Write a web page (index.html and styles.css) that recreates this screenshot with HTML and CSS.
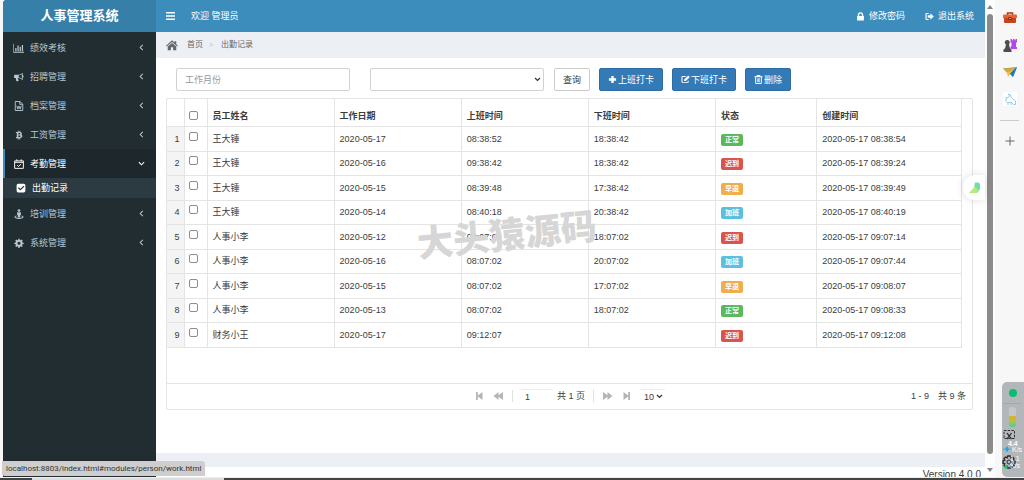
FILE: index.html
```html
<!DOCTYPE html>
<html lang="zh-CN">
<head>
<meta charset="utf-8">
<title>人事管理系统</title>
<link rel="stylesheet" href="styles.css">
</head>
<body>
<div class="window">
  <aside class="sidebar">
    <a class="logo" href="#">人事管理系统</a>
    <nav class="menu">
      <a class="menu-item" href="#"><svg class="icon" viewBox="0 0 18 16"><path d="M1 1v13h16v1.500H0V1zM3 8h2v5H3zM6.500 4h2v9h-2zM10 6h2v7h-2zM13.500 3h2v10h-2z"/></svg><span class="menu-text">绩效考核</span><svg class="caret" viewBox="0 0 8 8"><path d="M5.500 1 2.500 4l3 3"/></svg></a>
      <a class="menu-item" href="#"><svg class="icon" viewBox="0 0 18 16"><path fill-rule="evenodd" d="M15 1v4.500a1.500 1.500 0 0 1 0 3V13c-3-2.300-5-3.200-7.500-3.400-.8.800-.3 1.600.3 2.200.2.700.3 1.200 1 1.700-.8 1.500-3 1.500-4 .7-.5-1.500-1.200-2.800-.7-4.700H3C1 9.500 1 8.500 1 7s.3-2.500 2-2.500h4.500C10 4.300 12 3.300 15 1zM13.600 3.600C11.800 4.800 10.300 5.400 8.500 5.700v2.700c1.800.300 3.300.900 5.100 2.200z"/></svg><span class="menu-text">招聘管理</span><svg class="caret" viewBox="0 0 8 8"><path d="M5.500 1 2.500 4l3 3"/></svg></a>
      <a class="menu-item" href="#"><svg class="icon line" viewBox="0 0 18 16"><path d="M3 .8h7.500L15 5v10.200H3zM10.200 1v4.300H15M5.500 7.500 7 13l2-5 2 5 1.500-5.500"/></svg><span class="menu-text">档案管理</span><svg class="caret" viewBox="0 0 8 8"><path d="M5.500 1 2.500 4l3 3"/></svg></a>
      <a class="menu-item" href="#"><svg class="icon" viewBox="0 0 18 16"><path fill-rule="evenodd" d="M4 3h3V1h1.400v2h1.200V1H11v2.200c3 .4 3.600 3.500 1.600 4.500 3 1 2.400 5-1.600 5.200V15H9.600v-2H8.400v2H7v-2H4l.3-1.700h1.200V4.700H4zm4 1.800v2.300c2 0 3 0 3-1.200s-1-1.100-3-1.100zm0 3.900v2.500c2.300 0 3.500 0 3.500-1.300S10.200 8.700 8 8.700z"/></svg><span class="menu-text">工资管理</span><svg class="caret" viewBox="0 0 8 8"><path d="M5.500 1 2.500 4l3 3"/></svg></a>
      <a class="menu-item active" href="#"><svg class="icon line" viewBox="0 0 18 16"><path d="M2 3h14v12H2zM2 5.300h14M5.500.5v3M12.500.5v3M6 9.800l2.200 2.200 4-4.200"/></svg><span class="menu-text">考勤管理</span><svg class="caret" viewBox="0 0 8 8"><path d="M1 2.500l3 3 3-3"/></svg></a>
      <a class="submenu-item" href="#modules/person/work.html"><svg class="icon" viewBox="0 0 18 16"><path fill-rule="evenodd" d="M4.500 1h9A2.500 2.500 0 0 1 16 3.500v9a2.500 2.500 0 0 1-2.500 2.500h-9A2.500 2.500 0 0 1 2 12.500v-9A2.500 2.500 0 0 1 4.500 1zM4 8l4 4 6.500-6.300L13 4.200 8 9.200 5.500 6.600z"/></svg><span class="menu-text">出勤记录</span></a>
      <a class="menu-item" href="#"><svg class="icon" viewBox="0 0 18 16"><circle cx="9" cy="2.300" r="2.100"/><path d="M6 5h6v4.500h-1V13H7V9.500H6zM5 10.500v1.200c-3 .8-1.500 2.300 4 2.300s7-1.500 4-2.300v-1.200c6 1.500 3 5.300-4 5.300s-10-3.800-4-5.300z"/></svg><span class="menu-text">培训管理</span><svg class="caret" viewBox="0 0 8 8"><path d="M5.500 1 2.500 4l3 3"/></svg></a>
      <a class="menu-item" href="#"><svg class="icon" viewBox="0 0 18 16"><path fill-rule="evenodd" d="M8 1h2l.4 2 1.400.6 1.700-1.200 1.500 1.500-1.200 1.700.6 1.400 2 .4v2l-2 .4-.6 1.400 1.200 1.700-1.500 1.500-1.700-1.200-1.400.6-.4 2H8l-.4-2-1.400-.6-1.700 1.200L3 12.900l1.200-1.700-.6-1.400-2-.4v-2l2-.4.6-1.400L3 3.900l1.500-1.500 1.700 1.200L7.600 3zM9 5.900a2.500 2.500 0 1 0 0 5 2.500 2.500 0 0 0 0-5z"/></svg><span class="menu-text">系统管理</span><svg class="caret" viewBox="0 0 8 8"><path d="M5.500 1 2.500 4l3 3"/></svg></a>
    </nav>
  </aside>

  <main class="main">
    <header class="topbar">
      <button class="toggle" type="button" aria-label="切换菜单"><svg viewBox="0 0 9 8"><path d="M0 0h9v1.600H0zM0 3.200h9v1.600H0zM0 6.400h9V8H0z"/></svg></button>
      <span class="welcome">欢迎 管理员</span>
      <a class="top-link" href="#"><svg class="top-icon" viewBox="0 0 10 10"><path fill-rule="evenodd" d="M2 4.500V3.200a3 3 0 0 1 6 0v1.300h.8V9.500H1.200v-5zm1.500 0h3V3.200a1.500 1.500 0 0 0-3 0z"/></svg>修改密码</a>
      <a class="top-link" href="#"><svg class="top-icon" viewBox="0 0 10 10"><path d="M4 1v1.200H1.800v5.600H4V9H1.800Q.5 9 .5 7.800V2.200Q.5 1 1.800 1zM6 1.500 9.800 5 6 8.500v-2H3v-3h3z"/></svg>退出系统</a>
    </header>
    <nav class="breadcrumb">
      <svg class="home" viewBox="0 0 14 12"><path d="M7 0 10 2.600V1h2v3.400l2 1.800-.8.900L7 1.800.8 7.100 0 6.200zM7 3l5 4.300V11.500H8.300V8H5.700v3.500H2V7.300z"/></svg>
      <a href="#">首页</a><span class="sep">&gt;</span><a href="#">出勤记录</a>
    </nav>
    <section class="content">
      <form class="search">
        <input class="field" type="text" aria-label="工作月份" placeholder="工作月份">
        <select class="field" aria-label="状态"><option></option><option>正常</option><option>迟到</option><option>早退</option><option>加班</option></select>
        <div class="actions">
          <button class="btn" type="button">查询</button>
          <button class="btn primary" type="button"><svg viewBox="0 0 10 10"><path d="M3.700 1h2.600v2.700H9v2.600H6.300V9H3.700V6.300H1V3.700h2.700z"/></svg>上班打卡</button>
          <button class="btn primary" type="button"><svg viewBox="0 0 10 10"><path d="M6 1H2Q.5 1 .5 2.500v5Q.5 9 2 9h5q1.500 0 1.500-1.500V6L7.300 7v1H1.700V2.200h3zM8 .5 9.800 2.300 5.500 6.800H3.500V5z"/></svg>下班打卡</button>
          <button class="btn primary" type="button"><svg viewBox="0 0 10 10"><path fill-rule="evenodd" d="M3.200 0h3.600l.5 1.500H9.500v1H8.700V8.700q0 1.300-1.300 1.300H2.600Q1.300 10 1.300 8.700V2.500H.5v-1h2.200zM2.300 2.500V9h5.400V2.500zM3.200 3.500h.8V8h-.8zM4.600 3.500h.8V8h-.8zM6 3.500h.8V8H6z"/></svg>删除</button>
        </div>
      </form>

      <div class="grid">
        <table class="records">
          <colgroup><col class="c-num"><col class="c-check"><col class="c-wide"><col class="c-wide"><col class="c-wide"><col class="c-wide"><col class="c-status"><col></colgroup>
          <thead>
            <tr><th></th><th><input type="checkbox" aria-label="全选"></th><th>员工姓名</th><th>工作日期</th><th>上班时间</th><th>下班时间</th><th>状态</th><th>创建时间</th></tr>
          </thead>
          <tbody>
            <tr><td>1</td><td><input type="checkbox" aria-label="选择 1"></td><td>王大锤</td><td>2020-05-17</td><td>08:38:52</td><td>18:38:42</td><td><span class="tag green">正常</span></td><td>2020-05-17 08:38:54</td></tr>
            <tr><td>2</td><td><input type="checkbox" aria-label="选择 2"></td><td>王大锤</td><td>2020-05-16</td><td>09:38:42</td><td>18:38:42</td><td><span class="tag red">迟到</span></td><td>2020-05-17 08:39:24</td></tr>
            <tr><td>3</td><td><input type="checkbox" aria-label="选择 3"></td><td>王大锤</td><td>2020-05-15</td><td>08:39:48</td><td>17:38:42</td><td><span class="tag orange">早退</span></td><td>2020-05-17 08:39:49</td></tr>
            <tr><td>4</td><td><input type="checkbox" aria-label="选择 4"></td><td>王大锤</td><td>2020-05-14</td><td>08:40:18</td><td>20:38:42</td><td><span class="tag blue">加班</span></td><td>2020-05-17 08:40:19</td></tr>
            <tr><td>5</td><td><input type="checkbox" aria-label="选择 5"></td><td>人事小李</td><td>2020-05-12</td><td>09:07:02</td><td>18:07:02</td><td><span class="tag red">迟到</span></td><td>2020-05-17 09:07:14</td></tr>
            <tr><td>6</td><td><input type="checkbox" aria-label="选择 6"></td><td>人事小李</td><td>2020-05-16</td><td>08:07:02</td><td>20:07:02</td><td><span class="tag blue">加班</span></td><td>2020-05-17 09:07:44</td></tr>
            <tr><td>7</td><td><input type="checkbox" aria-label="选择 7"></td><td>人事小李</td><td>2020-05-15</td><td>08:07:02</td><td>17:07:02</td><td><span class="tag orange">早退</span></td><td>2020-05-17 09:08:07</td></tr>
            <tr><td>8</td><td><input type="checkbox" aria-label="选择 8"></td><td>人事小李</td><td>2020-05-13</td><td>08:07:02</td><td>18:07:02</td><td><span class="tag green">正常</span></td><td>2020-05-17 09:08:33</td></tr>
            <tr><td>9</td><td><input type="checkbox" aria-label="选择 9"></td><td>财务小王</td><td>2020-05-17</td><td>09:12:07</td><td></td><td><span class="tag red">迟到</span></td><td>2020-05-17 09:12:08</td></tr>
          </tbody>
        </table>
        <div class="pager">
          <div class="pager-nav">
            <button type="button" aria-label="首页"><svg viewBox="0 0 10 10"><path d="M1.500 1h1.800v3.500L8 1v8L3.300 5.500V9H1.500z"/></svg></button>
            <button type="button" aria-label="上一页"><svg viewBox="0 0 10 10"><path d="M5 1v3.300L9.500 1v8L5 5.700V9L0 5z"/></svg></button>
            <span class="bar"></span>
            <input class="page-no" type="text" value="1" aria-label="页码">
            <span>共 1 页</span>
            <span class="bar"></span>
            <button type="button" aria-label="下一页"><svg viewBox="0 0 10 10"><path d="M5 1v3.300L.5 1v8L5 5.700V9l5-4z"/></svg></button>
            <button type="button" aria-label="末页"><svg viewBox="0 0 10 10"><path d="M8.500 1H6.700v3.500L2 1v8l4.700-3.500V9h1.800z"/></svg></button>
            <span class="picker small"><select class="page-size" aria-label="每页条数"><option>10</option><option>20</option><option>50</option></select></span>
          </div>
          <div class="pager-info"><span>1 - 9</span><span>共 9 条</span></div>
        </div>
        <div class="watermark">大头猿源码</div>
      </div>
    </section>
    <div class="band"></div>
    <footer class="footer">Version 4.0.0</footer>
    <div class="bird-tab"><svg viewBox="0 0 12 12"><path fill="#6fdcae" d="M6 .5h3q2 0 2 2.500v4l-3 4H4z"/><path fill="#b4ea78" d="M0 11 6 4.500 9 7.500 7.500 11z"/></svg></div>
  </main>

  <div class="scrollbar"><svg viewBox="0 0 8 6"><path d="M4 1l3 4H1z"/></svg><div class="thumb"></div><svg viewBox="0 0 8 6"><path d="M4 5l3-4H1z"/></svg></div>

  <aside class="tools">
    <svg viewBox="0 0 14 14"><path fill="none" stroke="#a93a1a" stroke-width="1.500" d="M4.500 4V2h5v2"/><rect x="1" y="4" width="12" height="8" rx="1" fill="#c8421c"/><path fill="#e8632f" d="M0 4.500Q0 3.500 1 3.500h12q1 0 1 1V7H0z"/><rect x="5.500" y="6" width="3" height="3" fill="#552418"/><rect x="6.300" y="6.800" width="1.400" height="1.400" fill="#e4d4c8"/></svg>
    <svg viewBox="0 0 14 14"><path fill="#b544ec" d="M7.500 1H9v1.300h1V1h1.600v1.300h1V1H14v3l-1 1v4h1v2H7.500V9l1-1V5l-1-1z"/><path fill="#4d4d52" d="M2 5.500a2.500 2.500 0 1 1 4.500 0L6 6.500l1 4 1.500 1V14H.5v-2.500l1.500-1 1-4z"/></svg>
    <svg viewBox="0 0 14 14"><path fill="#39a7ee" d="M0 3.500 14 2 10 12 7 9z"/><path fill="#e4a52a" d="M0 3.500 12 3 4 8z"/><path fill="#f2c12f" d="m4 8 8-5-7 9z"/><path fill="#1e76cc" d="M7 8.500 14 2l-4 10z"/></svg>
    <svg viewBox="0 0 14 14"><path fill="#fff" d="M0 0h14v14H0z"/><path fill="none" stroke="#92cdee" d="M5 2a2 2 0 1 1-2.500 3M5 2 7.500 3l1 3 4 3v3.500h-2l-2-2H4L2.500 9l1-3M5 10.500V13M8 10.500V13"/></svg>
    <hr>
    <svg viewBox="0 0 14 14"><path fill="none" stroke="#666" d="M7 2.500v9M2.500 7h9"/></svg>
  </aside>
</div>
<div class="taskbar"><i></i><b></b><i class="rest"></i></div>
<div class="status">localhost:8803/index.html#modules/person/work.html</div>
<div class="monitor">
  <svg class="light" viewBox="0 0 22 24"><circle cx="11" cy="11" r="4" fill="#08bd6d"/><path stroke="#a5a8aa" d="M1 21.500h18"/></svg>
  <div class="meter"></div>
  <svg class="snip" viewBox="0 0 22 12"><path fill="none" stroke="#333" stroke-dasharray="2.500 1.200" d="M2 1.500h10.500v8H2z"/><path fill="none" stroke="#222" stroke-width="1.200" d="m5 4 4.500 6M9.500 4 5 10"/></svg>
  <span class="rate">4.4</span>
  <span class="unit"><svg viewBox="0 0 10 8"><path fill="#20a6ec" d="m5 0 2 3h3v1H7L5 7 3 4H0V3h3z"/></svg>K/s</span>
  <div class="upload">
    <svg class="gear" viewBox="0 0 14 14"><path fill="none" stroke="#252a2b" stroke-width="1.300" d="M5.800 1h2.400l.6 1.800L10.500 2l1.500 1.500-.8 1.700 1.800.6v2.400l-1.800.6.8 1.700-1.500 1.500-1.700-.8-.6 1.800H5.800l-.6-1.800-1.700.8L2 10.500l.8-1.700L1 8.200V5.800l1.800-.6L2 3.500 3.500 2l1.700.8z"/><circle cx="7" cy="7" r="2" fill="none" stroke="#252a2b"/><circle cx="4" cy="12" r="1.800" fill="#18c45a"/></svg>
    <span class="upload-text">1.1<br>K/s</span>
  </div>
</div>
</body>
</html>
```

FILE: styles.css
```css
* { box-sizing: border-box; }

body {
  margin: 0;
  height: 100vh;
  display: flex;
  flex-direction: column;
  background: #f7f7f7;
  color: #3c3c3c;
  font: 9px/14px "Liberation Sans", "Noto Sans CJK SC", sans-serif;
  overflow: hidden;
}

a { color: inherit; text-decoration: none; }
button, input, select { font: inherit; color: inherit; margin: 0; }
button { border: 0; background: none; padding: 0; cursor: pointer; }
svg { display: block; fill: currentColor; flex: none; }

.window { flex: 1; min-height: 0; display: flex; padding-left: 3px; }

/* Sidebar */
.sidebar {
  width: 153px;
  flex: none;
  background: #222d32;
  color: #b8c7ce;
  border-top-left-radius: 4px;
  overflow: hidden;
}
.logo {
  display: block;
  height: 32px;
  background: #367fa9;
  color: #fff;
  font-size: 13px;
  font-weight: bold;
  line-height: 32px;
  text-align: center;
}
.menu { display: flex; flex-direction: column; padding-top: 1px; }
.menu-item, .submenu-item {
  display: flex;
  align-items: center;
  gap: 5px;
  height: 29px;
  padding: 0 11px 0 8px;
  border-left: 2px solid transparent;
}
.menu-item.active { background: #1e282c; border-left-color: #3c8dbc; color: #fff; }
.submenu-item { height: 20px; margin-bottom: 1px; padding-left: 10px; background: #2c3b41; color: #fff; }
.icon { width: 12px; height: 10px; }
.line { fill: none; stroke: currentColor; stroke-width: 1.5; }
.menu-text { flex: 1; }
.caret { width: 7px; height: 7px; fill: none; stroke: currentColor; stroke-width: 1.2; }

/* Main column */
.main {
  flex: 1;
  min-width: 0;
  display: flex;
  flex-direction: column;
  background: #fff;
  position: relative;
}
.topbar {
  display: flex;
  align-items: center;
  height: 32px;
  flex: none;
  padding: 0 11px 0 10px;
  background: #3c8dbc;
  color: #fff;
}
.toggle svg { width: 9px; height: 8px; }
.welcome { margin-left: 16px; margin-right: auto; }
.top-link { display: flex; align-items: center; gap: 4px; margin-left: 20px; }
.top-icon { width: 9px; height: 9px; }
.breadcrumb {
  display: flex;
  align-items: center;
  height: 26px;
  flex: none;
  padding: 0 10px;
  background: #ecf0f5;
  color: #666;
  font-size: 8px;
}
.home { width: 12px; height: 11px; margin-right: 9px; }
.sep { margin: 0 8px 0 6px; color: #bbb; font-size: 7px; }

.content { flex: 1; min-height: 0; padding: 10px 12px 0 10px; }

/* Search form */
.search { display: flex; gap: 20px; padding-left: 10px; margin-bottom: 7px; }
.field {
  width: 174px;
  height: 23px;
  padding: 0 8px;
  border: 1px solid #d2d2d2;
  border-radius: 2px;
  background: #fff;
}
select.field, .page-size {
  appearance: none;
  background: #fff url("data:image/svg+xml,%3Csvg xmlns='http://www.w3.org/2000/svg' viewBox='0 0 7 5'%3E%3Cpath d='M1 1l2.500 2.500L6 1' fill='none' stroke='%23333' stroke-width='1.200'/%3E%3C/svg%3E") no-repeat right 2px center / 7px 5px;
}
.field::placeholder { color: #999; opacity: 1; }
.actions { display: flex; gap: 9px; margin-left: -10px; }
.btn {
  display: flex;
  align-items: center;
  gap: 1px;
  height: 23px;
  padding: 0 8px;
  border: 1px solid #ccc;
  border-radius: 2px;
  background: #fff;
  white-space: nowrap;
}
.btn svg { width: 9px; height: 9px; }
.btn.primary { border-color: #2e6da4; background: #337ab7; color: #fff; }

/* Data grid */
.grid { position: relative; border: 1px solid #e4e4e4; border-radius: 2px; }
.records {
  width: calc(100% - 10px);
  margin-bottom: 35px;
  table-layout: fixed;
  border-collapse: collapse;
}
.c-num { width: 17px; }
.c-check { width: 23px; }
.c-wide { width: 16%; }
.c-status { width: 12.75%; }
.records th, .records td {
  height: 24px;
  padding: 0 5px;
  border: 1px solid #e4e4e4;
  border-left: 0;
  line-height: 14px;
  text-align: left;
  white-space: nowrap;
}
.records th { height: 27px; padding-top: 7px; border-top: 0; }
.records tbody tr:nth-child(odd) td { height: 25px; }
.records td:first-child { padding: 0 4px 0 0; background: #f4f4f4; text-align: right; }
.records td:nth-child(2), .records th:nth-child(2) { padding-left: 4px; }
.records input {
  appearance: none;
  display: block;
  width: 9px;
  height: 9px;
  border: 1px solid #8c8c8c;
  border-radius: 2px;
  background: #fff;
}
.records input:checked { background: #337ab7; }
.records td input { margin-bottom: 5px; }
.tag {
  display: block;
  width: fit-content;
  margin-top: 2px;
  padding: 0 4px;
  border-radius: 2px;
  color: #fff;
  font-size: 7px;
  font-weight: bold;
  line-height: 12px;
}
.green { background: #5cb85c; }
.red { background: #d9534f; }
.orange { background: #f0ad4e; }
.blue { background: #5bc0de; }

.pager {
  display: grid;
  grid-template-columns: 1fr auto 1fr;
  align-items: center;
  height: 26px;
  padding: 0 6px;
  border-top: 1px solid #e4e4e4;
}
.pager-nav { grid-column: 2; display: flex; align-items: center; gap: 8px; }
.pager-nav button { color: #b5b5b5; }
.pager-nav svg { width: 11px; height: 10px; }
.bar { width: 1px; height: 12px; background: #e2e2e2; }
.page-no { width: 32px; height: 14px; padding: 0 4px; border: 0; border-top: 1px solid #eee; margin-right: -4px; }
.page-size { width: 25px; height: 14px; padding: 0 4px; border: 0; border-top: 1px solid #eee; }
.pager-info { display: flex; gap: 9px; justify-content: flex-end; }

.watermark {
  position: absolute;
  left: 31%;
  top: 37%;
  color: #d6d6d6;
  font-size: 36px;
  line-height: 44px;
  font-weight: 900;
  transform: rotate(-6deg);
  pointer-events: none;
}

.band { height: 14px; flex: none; background: #ecf0f5; }
.footer { height: 10px; flex: none; padding: 0 4px; font-size: 10px; line-height: 16px; text-align: right; overflow: hidden; }

.bird-tab {
  position: absolute;
  right: 0;
  top: 175px;
  display: flex;
  align-items: center;
  width: 22px;
  height: 25px;
  padding-left: 6px;
  border-radius: 12px 0 0 12px;
  background: #fff;
  box-shadow: 0 0 8px #0002;
}
.bird-tab svg { width: 12px; height: 12px; }

/* Scrollbar and browser tools */
.scrollbar {
  width: 10px;
  flex: none;
  display: flex;
  flex-direction: column;
  align-items: center;
  padding: 4px 0;
  background: #fdfdfd;
  color: #858585;
}
.scrollbar svg { width: 8px; height: 6px; }
.thumb { width: 6px; margin: 4px 0 13px; flex: 1; border-radius: 3px; background: #8b8b8b; }
.tools {
  width: 29px;
  flex: none;
  display: flex;
  flex-direction: column;
  align-items: center;
  gap: 13px;
  padding-top: 11px;
  background: #f7f7f7;
}
.tools svg { width: 14px; height: 14px; }
.tools hr { width: 19px; margin: 1px 0 0; border: 0; border-top: 1px solid #ccc; }

.taskbar { display: flex; height: 3px; flex: none; border-top: 1px solid #eee; background: #ddd; }
.taskbar i { width: 32px; background: #444; }
.taskbar b { width: 192px; }
.taskbar .rest { width: auto; flex: 1; }

.status {
  position: absolute;
  left: 2px;
  bottom: 4px;
  height: 15px;
  padding: 0 4px;
  border-radius: 0 3px 0 3px;
  background: #cecece;
  color: #333;
  font-family: Roboto, sans-serif;
  font-size: 8px;
  line-height: 15px;
}
.monitor {
  position: absolute;
  right: 0;
  bottom: 3px;
  width: 22px;
  height: 95px;
  border-radius: 5px 0 0 5px;
  background: #b4b7ba;
  color: #fff;
  font-size: 7px;
  line-height: 7px;
}
.light { width: 22px; height: 24px; }
.meter { width: 7px; height: 20px; margin: 1px 0 2px 7px; border-radius: 3px; background: linear-gradient(#c4c6c8 45%, #d8b22a 46%, #b6c43a 70%, #49cda1); }
.snip { width: 22px; height: 12px; }
.rate { display: block; padding-left: 6px; font-weight: bold; line-height: 5px; }
.unit { display: flex; align-items: center; }
.unit svg { width: 10px; height: 7px; }
.upload { display: flex; align-items: center; padding-top: 2px; }
.gear { width: 14px; height: 14px; }
.upload-text { margin-left: -6px; }
```
